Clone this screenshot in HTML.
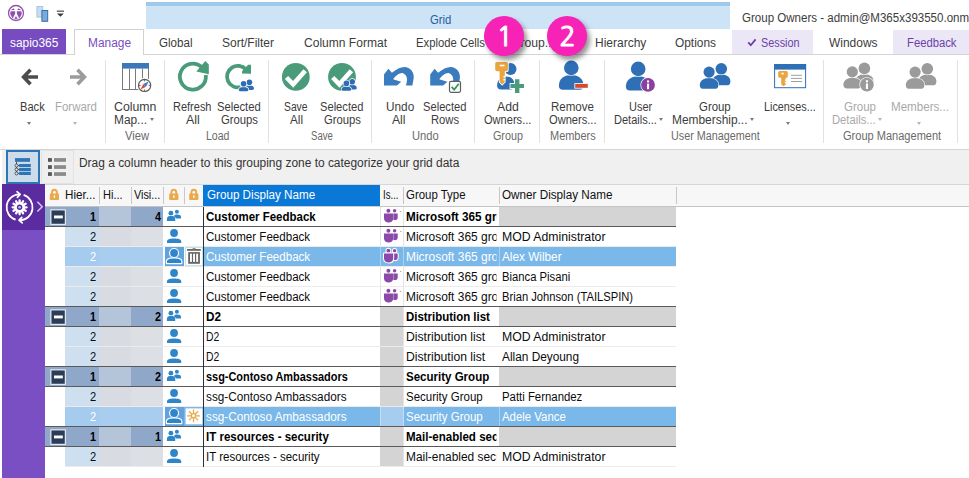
<!DOCTYPE html><html><head><meta charset="utf-8"><title>Group Owners</title><style>
*{margin:0;padding:0;box-sizing:border-box}
html,body{width:969px;height:478px;overflow:hidden;background:#fff}
body{position:relative;font-family:"Liberation Sans",sans-serif;font-size:12px;color:#444;line-height:14px}
.a{position:absolute}
.t{position:absolute;white-space:nowrap;line-height:14px;height:14px;transform-origin:0 0}
.k{position:absolute;white-space:nowrap;overflow:hidden;line-height:14px;height:16px;transform-origin:0 0}
.sep{position:absolute;top:60px;width:1px;height:83px;background:#e2e2e2}
.car{position:absolute;width:0;height:0;border-left:2.5px solid transparent;border-right:2.5px solid transparent;border-top:3px solid #7a7a7a}
.cell{position:absolute;height:19px}
</style></head><body>
<div class="a" style="left:146px;top:2px;width:584px;height:27px;background:#cde3f6;"></div>
<div class="a" style="left:146px;top:2px;width:584px;height:4px;background:#9ec9eb;"></div>
<div class="t" style="left:429.5px;top:13px;color:#1f5f9f;transform:scaleX(0.940)">Grid</div>
<div class="t" style="left:741.7px;top:11px;color:#3c3c3c;transform:scaleX(0.961)">Group Owners - admin@M365x393550.onmicrosoft.com</div>
<div class="a" style="left:0px;top:54px;width:969px;height:1px;background:#d4d4d4;"></div>
<div class="a" style="left:2px;top:29px;width:64px;height:25px;background:#764cc0;"></div>
<div class="t" style="left:10.0px;top:36px;color:#fff;font-size:12.5px;transform:scaleX(0.952)">sapio365</div>
<div class="a" style="left:74px;top:29px;width:70px;height:26px;background:#fff;border:1px solid #d0d0d0;border-bottom:none"></div>
<div class="t" style="left:87.5px;top:36px;color:#7a4cc0;font-size:12.5px;transform:scaleX(0.952)">Manage</div>
<div class="a" style="left:732px;top:30px;width:81px;height:24px;background:#ece7f6;"></div>
<div class="a" style="left:893px;top:30px;width:76px;height:24px;background:#ece7f6;"></div>
<div class="t" style="left:159.0px;top:36px;color:#3c3c3c;transform:scaleX(0.966)">Global</div>
<div class="t" style="left:222.0px;top:36px;color:#3c3c3c;transform:scaleX(1.000)">Sort/Filter</div>
<div class="t" style="left:303.5px;top:36px;color:#3c3c3c;transform:scaleX(1.004)">Column Format</div>
<div class="t" style="left:416.3px;top:36px;color:#3c3c3c;transform:scaleX(0.940)">Explode Cells</div>
<div class="t" style="left:510.6px;top:36px;color:#3c3c3c;transform:scaleX(1.015)">Group...</div>
<div class="t" style="left:594.7px;top:36px;color:#3c3c3c;transform:scaleX(0.999)">Hierarchy</div>
<div class="t" style="left:675.0px;top:36px;color:#3c3c3c;transform:scaleX(0.991)">Options</div>
<div class="t" style="left:760.5px;top:36px;color:#6b40a8;transform:scaleX(0.902)">Session</div>
<div class="t" style="left:828.5px;top:36px;color:#3c3c3c;transform:scaleX(0.996)">Windows</div>
<div class="t" style="left:906.5px;top:36px;color:#6b40a8;transform:scaleX(0.939)">Feedback</div>
<div class="a" style="left:0px;top:149px;width:969px;height:1px;background:#d4d4d4;"></div>
<div class="sep" style="left:105px"></div>
<div class="sep" style="left:164px"></div>
<div class="sep" style="left:268px"></div>
<div class="sep" style="left:371px"></div>
<div class="sep" style="left:474px"></div>
<div class="sep" style="left:539px"></div>
<div class="sep" style="left:604px"></div>
<div class="sep" style="left:823px"></div>
<div class="sep" style="left:957px"></div>
<div class="t" style="left:19.5px;top:100px;color:#3c3c3c;transform:scaleX(0.925)">Back</div>
<div class="t" style="left:55.4px;top:100px;color:#a9a9a9;transform:scaleX(0.954)">Forward</div>
<div class="t" style="left:114.4px;top:100px;color:#3c3c3c;transform:scaleX(1.025)">Column</div>
<div class="t" style="left:114.4px;top:113px;color:#3c3c3c;transform:scaleX(0.990)">Map...</div>
<div class="t" style="left:173.3px;top:100px;color:#3c3c3c;transform:scaleX(0.916)">Refresh</div>
<div class="t" style="left:186.0px;top:113px;color:#3c3c3c;transform:scaleX(1.034)">All</div>
<div class="t" style="left:217.0px;top:100px;color:#3c3c3c;transform:scaleX(0.936)">Selected</div>
<div class="t" style="left:220.5px;top:113px;color:#3c3c3c;transform:scaleX(0.940)">Groups</div>
<div class="t" style="left:284.4px;top:100px;color:#3c3c3c;transform:scaleX(0.859)">Save</div>
<div class="t" style="left:289.9px;top:113px;color:#3c3c3c;transform:scaleX(0.975)">All</div>
<div class="t" style="left:320.4px;top:100px;color:#3c3c3c;transform:scaleX(0.929)">Selected</div>
<div class="t" style="left:323.6px;top:113px;color:#3c3c3c;transform:scaleX(0.940)">Groups</div>
<div class="t" style="left:385.6px;top:100px;color:#3c3c3c;transform:scaleX(0.983)">Undo</div>
<div class="t" style="left:391.8px;top:113px;color:#3c3c3c;transform:scaleX(1.012)">All</div>
<div class="t" style="left:423.0px;top:100px;color:#3c3c3c;transform:scaleX(0.931)">Selected</div>
<div class="t" style="left:431.2px;top:113px;color:#3c3c3c;transform:scaleX(0.933)">Rows</div>
<div class="t" style="left:496.9px;top:100px;color:#3c3c3c;transform:scaleX(1.021)">Add</div>
<div class="t" style="left:483.7px;top:113px;color:#3c3c3c;transform:scaleX(0.923)">Owners...</div>
<div class="t" style="left:551.1px;top:100px;color:#3c3c3c;transform:scaleX(0.962)">Remove</div>
<div class="t" style="left:549.1px;top:113px;color:#3c3c3c;transform:scaleX(0.925)">Owners...</div>
<div class="t" style="left:629.2px;top:100px;color:#3c3c3c;transform:scaleX(0.916)">User</div>
<div class="t" style="left:613.7px;top:113px;color:#3c3c3c;transform:scaleX(0.919)">Details...</div>
<div class="t" style="left:699.4px;top:100px;color:#3c3c3c;transform:scaleX(0.951)">Group</div>
<div class="t" style="left:672.4px;top:113px;color:#3c3c3c;transform:scaleX(0.993)">Membership...</div>
<div class="t" style="left:763.6px;top:100px;color:#3c3c3c;transform:scaleX(0.901)">Licenses...</div>
<div class="t" style="left:843.6px;top:100px;color:#a9a9a9;transform:scaleX(0.960)">Group</div>
<div class="t" style="left:832.4px;top:113px;color:#a9a9a9;transform:scaleX(0.936)">Details...</div>
<div class="t" style="left:891.3px;top:100px;color:#a9a9a9;transform:scaleX(0.967)">Members...</div>
<div class="t" style="left:124.9px;top:129px;color:#6a6a6a;transform:scaleX(0.937)">View</div>
<div class="t" style="left:206.3px;top:129px;color:#6a6a6a;transform:scaleX(0.880)">Load</div>
<div class="t" style="left:310.6px;top:129px;color:#6a6a6a;transform:scaleX(0.800)">Save</div>
<div class="t" style="left:411.8px;top:129px;color:#6a6a6a;transform:scaleX(0.931)">Undo</div>
<div class="t" style="left:493.2px;top:129px;color:#6a6a6a;transform:scaleX(0.897)">Group</div>
<div class="t" style="left:550.4px;top:129px;color:#6a6a6a;transform:scaleX(0.914)">Members</div>
<div class="t" style="left:670.7px;top:129px;color:#6a6a6a;transform:scaleX(0.898)">User Management</div>
<div class="t" style="left:843.1px;top:129px;color:#6a6a6a;transform:scaleX(0.920)">Group Management</div>
<div class="car" style="left:27.3px;top:122px;border-top-color:#7a7a7a"></div>
<div class="car" style="left:73.1px;top:122px;border-top-color:#b5b5b5"></div>
<div class="car" style="left:149.5px;top:117.5px;border-top-color:#7a7a7a"></div>
<div class="car" style="left:659.2px;top:117.5px;border-top-color:#7a7a7a"></div>
<div class="car" style="left:749.9px;top:117.5px;border-top-color:#7a7a7a"></div>
<div class="car" style="left:786.0px;top:122px;border-top-color:#7a7a7a"></div>
<div class="car" style="left:878.0px;top:117.5px;border-top-color:#b5b5b5"></div>
<div class="car" style="left:916.8px;top:122px;border-top-color:#b5b5b5"></div>
<div class="a" style="left:2px;top:150px;width:967px;height:34px;background:#f0f0f0;"></div>
<div class="a" style="left:6px;top:150px;width:34px;height:34px;background:#cddceb;border:2px solid #2e75b6"></div>
<div class="a" style="left:41px;top:150px;width:33px;height:34px;background:#efefef;border:1px solid #e2e2e2"></div>
<div class="t" style="left:79.2px;top:156px;color:#333;transform:scaleX(0.995)">Drag a column header to this grouping zone to categorize your grid data</div>
<div class="a" style="left:2px;top:184px;width:43px;height:294px;background:#7a4fc4;"></div>
<div class="a" style="left:2px;top:184px;width:43px;height:46px;background:#5a2ca0;"></div>
<div class="a" style="left:45px;top:184px;width:924px;height:23px;background:#f7f7f7;border-top:1px solid #d6d6d6;border-bottom:1px solid #cfcfcf"></div>
<div class="a" style="left:203px;top:185px;width:177px;height:21px;background:#0a78d7;"></div>
<div class="a" style="left:99px;top:187px;width:1px;height:17px;background:#c8c8c8;"></div>
<div class="a" style="left:131px;top:187px;width:1px;height:17px;background:#c8c8c8;"></div>
<div class="a" style="left:163px;top:187px;width:1px;height:17px;background:#c8c8c8;"></div>
<div class="a" style="left:184px;top:187px;width:1px;height:17px;background:#c8c8c8;"></div>
<div class="a" style="left:403px;top:187px;width:1px;height:17px;background:#c8c8c8;"></div>
<div class="a" style="left:499px;top:187px;width:1px;height:17px;background:#c8c8c8;"></div>
<div class="a" style="left:676px;top:187px;width:1px;height:17px;background:#c8c8c8;"></div>
<div class="t" style="left:65.4px;top:188px;color:#111;transform:scaleX(0.973)">Hier...</div>
<div class="t" style="left:102.7px;top:188px;color:#111;transform:scaleX(0.919)">Hi...</div>
<div class="t" style="left:134.2px;top:188px;color:#111;transform:scaleX(0.903)">Visi...</div>
<div class="t" style="left:206.8px;top:188px;color:#fff;transform:scaleX(0.971)">Group Display Name</div>
<div class="t" style="left:382.8px;top:188px;color:#111;transform:scaleX(0.801)">Is...</div>
<div class="t" style="left:406.3px;top:188px;color:#111;transform:scaleX(0.952)">Group Type</div>
<div class="t" style="left:502.4px;top:188px;color:#111;transform:scaleX(0.975)">Owner Display Name</div>
<div class="a" style="left:45px;top:207px;width:54px;height:19px;background:#8fa8ca;"></div>
<div class="a" style="left:99px;top:207px;width:32px;height:19px;background:#b4c4d9;"></div>
<div class="a" style="left:131px;top:207px;width:32px;height:19px;background:#8fa8ca;"></div>
<div class="a" style="left:499px;top:207px;width:177px;height:19px;background:#d4d4d4;"></div>
<div class="t" style="left:90.0px;top:210px;color:#000;font-weight:bold;transform:scaleX(0.900)">1</div>
<div class="t" style="left:154.6px;top:210px;color:#000;font-weight:bold;transform:scaleX(0.900)">4</div>
<div class="t" style="left:206.3px;top:210px;color:#000;font-weight:bold;transform:scaleX(0.956)">Customer Feedback</div>
<div class="k" style="left:406.3px;width:92.6px;top:210px;color:#000;font-weight:bold;transform:scaleX(0.977)">Microsoft 365 group</div>
<div class="a" style="left:45px;top:226px;width:631px;height:1px;background:#5a5a5a;"></div>
<div class="a" style="left:380px;top:207px;width:1px;height:19px;background:#e4e4e4;"></div>
<div class="a" style="left:403px;top:207px;width:1px;height:19px;background:#e4e4e4;"></div>
<div class="a" style="left:65px;top:227px;width:34px;height:19px;background:#cedfef;"></div>
<div class="a" style="left:99px;top:227px;width:32px;height:19px;background:#d8dce2;"></div>
<div class="a" style="left:131px;top:227px;width:32px;height:19px;background:#dcdfe3;"></div>
<div class="t" style="left:90.2px;top:230px;color:#0c0c0c;transform:scaleX(0.930)">2</div>
<div class="t" style="left:206.3px;top:230px;color:#0c0c0c;transform:scaleX(0.964)">Customer Feedback</div>
<div class="k" style="left:406.3px;width:91.0px;top:230px;color:#0c0c0c;transform:scaleX(0.995)">Microsoft 365 group</div>
<div class="t" style="left:502.4px;top:230px;color:#0c0c0c;transform:scaleX(1.021)">MOD Administrator</div>
<div class="a" style="left:65px;top:246px;width:611px;height:1px;background:#ebebeb;"></div>
<div class="a" style="left:380px;top:227px;width:1px;height:19px;background:#e4e4e4;"></div>
<div class="a" style="left:403px;top:227px;width:1px;height:19px;background:#e4e4e4;"></div>
<div class="a" style="left:65px;top:247px;width:34px;height:19px;background:#a5cbee;"></div>
<div class="a" style="left:99px;top:247px;width:32px;height:19px;background:#a9cdef;"></div>
<div class="a" style="left:131px;top:247px;width:32px;height:19px;background:#a9cdef;"></div>
<div class="a" style="left:164px;top:247px;width:512px;height:19px;background:#7ab8ea;"></div>
<div class="a" style="left:380px;top:247px;width:24px;height:19px;background:#7ab8ea;"></div>
<div class="t" style="left:90.2px;top:250px;color:#fff;transform:scaleX(0.930)">2</div>
<div class="t" style="left:206.3px;top:250px;color:#fff;transform:scaleX(0.964)">Customer Feedback</div>
<div class="k" style="left:406.3px;width:91.0px;top:250px;color:#fff;transform:scaleX(0.995)">Microsoft 365 group</div>
<div class="t" style="left:502.4px;top:250px;color:#fff;transform:scaleX(0.982)">Alex Wilber</div>
<div class="a" style="left:65px;top:266px;width:611px;height:1px;background:#ebebeb;"></div>
<div class="a" style="left:380px;top:247px;width:1px;height:19px;background:rgba(255,255,255,.35);"></div>
<div class="a" style="left:403px;top:247px;width:1px;height:19px;background:rgba(255,255,255,.35);"></div>
<div class="a" style="left:499px;top:247px;width:1px;height:19px;background:rgba(255,255,255,.35);"></div>
<div class="a" style="left:65px;top:267px;width:34px;height:19px;background:#cedfef;"></div>
<div class="a" style="left:99px;top:267px;width:32px;height:19px;background:#d8dce2;"></div>
<div class="a" style="left:131px;top:267px;width:32px;height:19px;background:#dcdfe3;"></div>
<div class="t" style="left:90.2px;top:270px;color:#0c0c0c;transform:scaleX(0.930)">2</div>
<div class="t" style="left:206.3px;top:270px;color:#0c0c0c;transform:scaleX(0.964)">Customer Feedback</div>
<div class="k" style="left:406.3px;width:91.0px;top:270px;color:#0c0c0c;transform:scaleX(0.995)">Microsoft 365 group</div>
<div class="t" style="left:502.4px;top:270px;color:#0c0c0c;transform:scaleX(0.939)">Bianca Pisani</div>
<div class="a" style="left:65px;top:286px;width:611px;height:1px;background:#ebebeb;"></div>
<div class="a" style="left:380px;top:267px;width:1px;height:19px;background:#e4e4e4;"></div>
<div class="a" style="left:403px;top:267px;width:1px;height:19px;background:#e4e4e4;"></div>
<div class="a" style="left:65px;top:287px;width:34px;height:19px;background:#cedfef;"></div>
<div class="a" style="left:99px;top:287px;width:32px;height:19px;background:#d8dce2;"></div>
<div class="a" style="left:131px;top:287px;width:32px;height:19px;background:#dcdfe3;"></div>
<div class="t" style="left:90.2px;top:290px;color:#0c0c0c;transform:scaleX(0.930)">2</div>
<div class="t" style="left:206.3px;top:290px;color:#0c0c0c;transform:scaleX(0.964)">Customer Feedback</div>
<div class="k" style="left:406.3px;width:91.0px;top:290px;color:#0c0c0c;transform:scaleX(0.995)">Microsoft 365 group</div>
<div class="t" style="left:502.4px;top:290px;color:#0c0c0c;transform:scaleX(0.933)">Brian Johnson (TAILSPIN)</div>
<div class="a" style="left:45px;top:306px;width:631px;height:1px;background:#5a5a5a;"></div>
<div class="a" style="left:380px;top:287px;width:1px;height:19px;background:#e4e4e4;"></div>
<div class="a" style="left:403px;top:287px;width:1px;height:19px;background:#e4e4e4;"></div>
<div class="a" style="left:45px;top:307px;width:54px;height:19px;background:#8fa8ca;"></div>
<div class="a" style="left:99px;top:307px;width:32px;height:19px;background:#b4c4d9;"></div>
<div class="a" style="left:131px;top:307px;width:32px;height:19px;background:#8fa8ca;"></div>
<div class="a" style="left:380px;top:307px;width:24px;height:19px;background:#d4d4d4;"></div>
<div class="a" style="left:499px;top:307px;width:177px;height:19px;background:#d4d4d4;"></div>
<div class="t" style="left:90.0px;top:310px;color:#000;font-weight:bold;transform:scaleX(0.900)">1</div>
<div class="t" style="left:154.6px;top:310px;color:#000;font-weight:bold;transform:scaleX(0.900)">2</div>
<div class="t" style="left:206.3px;top:310px;color:#000;font-weight:bold;transform:scaleX(0.978)">D2</div>
<div class="k" style="left:406.3px;width:94.9px;top:310px;color:#000;font-weight:bold;transform:scaleX(0.953)">Distribution list</div>
<div class="a" style="left:45px;top:326px;width:631px;height:1px;background:#5a5a5a;"></div>
<div class="a" style="left:403px;top:307px;width:1px;height:19px;background:#e4e4e4;"></div>
<div class="a" style="left:65px;top:327px;width:34px;height:19px;background:#cedfef;"></div>
<div class="a" style="left:99px;top:327px;width:32px;height:19px;background:#d8dce2;"></div>
<div class="a" style="left:131px;top:327px;width:32px;height:19px;background:#dcdfe3;"></div>
<div class="a" style="left:380px;top:327px;width:24px;height:19px;background:#d4d4d4;"></div>
<div class="t" style="left:90.2px;top:330px;color:#0c0c0c;transform:scaleX(0.930)">2</div>
<div class="t" style="left:206.3px;top:330px;color:#0c0c0c;transform:scaleX(0.867)">D2</div>
<div class="k" style="left:406.3px;width:89.2px;top:330px;color:#0c0c0c;transform:scaleX(1.015)">Distribution list</div>
<div class="t" style="left:502.4px;top:330px;color:#0c0c0c;transform:scaleX(1.021)">MOD Administrator</div>
<div class="a" style="left:65px;top:346px;width:611px;height:1px;background:#ebebeb;"></div>
<div class="a" style="left:403px;top:327px;width:1px;height:19px;background:#e4e4e4;"></div>
<div class="a" style="left:65px;top:347px;width:34px;height:19px;background:#cedfef;"></div>
<div class="a" style="left:99px;top:347px;width:32px;height:19px;background:#d8dce2;"></div>
<div class="a" style="left:131px;top:347px;width:32px;height:19px;background:#dcdfe3;"></div>
<div class="a" style="left:380px;top:347px;width:24px;height:19px;background:#d4d4d4;"></div>
<div class="t" style="left:90.2px;top:350px;color:#0c0c0c;transform:scaleX(0.930)">2</div>
<div class="t" style="left:206.3px;top:350px;color:#0c0c0c;transform:scaleX(0.867)">D2</div>
<div class="k" style="left:406.3px;width:89.2px;top:350px;color:#0c0c0c;transform:scaleX(1.015)">Distribution list</div>
<div class="t" style="left:502.4px;top:350px;color:#0c0c0c;transform:scaleX(0.987)">Allan Deyoung</div>
<div class="a" style="left:45px;top:366px;width:631px;height:1px;background:#5a5a5a;"></div>
<div class="a" style="left:403px;top:347px;width:1px;height:19px;background:#e4e4e4;"></div>
<div class="a" style="left:45px;top:367px;width:54px;height:19px;background:#8fa8ca;"></div>
<div class="a" style="left:99px;top:367px;width:32px;height:19px;background:#b4c4d9;"></div>
<div class="a" style="left:131px;top:367px;width:32px;height:19px;background:#8fa8ca;"></div>
<div class="a" style="left:380px;top:367px;width:24px;height:19px;background:#d4d4d4;"></div>
<div class="a" style="left:499px;top:367px;width:177px;height:19px;background:#d4d4d4;"></div>
<div class="t" style="left:90.0px;top:370px;color:#000;font-weight:bold;transform:scaleX(0.900)">1</div>
<div class="t" style="left:154.6px;top:370px;color:#000;font-weight:bold;transform:scaleX(0.900)">2</div>
<div class="t" style="left:206.3px;top:370px;color:#000;font-weight:bold;transform:scaleX(0.911)">ssg-Contoso Ambassadors</div>
<div class="k" style="left:406.3px;width:94.3px;top:370px;color:#000;font-weight:bold;transform:scaleX(0.960)">Security Group</div>
<div class="a" style="left:45px;top:386px;width:631px;height:1px;background:#5a5a5a;"></div>
<div class="a" style="left:403px;top:367px;width:1px;height:19px;background:#e4e4e4;"></div>
<div class="a" style="left:65px;top:387px;width:34px;height:19px;background:#cedfef;"></div>
<div class="a" style="left:99px;top:387px;width:32px;height:19px;background:#d8dce2;"></div>
<div class="a" style="left:131px;top:387px;width:32px;height:19px;background:#dcdfe3;"></div>
<div class="a" style="left:380px;top:387px;width:24px;height:19px;background:#d4d4d4;"></div>
<div class="t" style="left:90.2px;top:390px;color:#0c0c0c;transform:scaleX(0.930)">2</div>
<div class="t" style="left:206.3px;top:390px;color:#0c0c0c;transform:scaleX(0.980)">ssg-Contoso Ambassadors</div>
<div class="k" style="left:406.3px;width:94.4px;top:390px;color:#0c0c0c;transform:scaleX(0.958)">Security Group</div>
<div class="t" style="left:502.4px;top:390px;color:#0c0c0c;transform:scaleX(0.948)">Patti Fernandez</div>
<div class="a" style="left:65px;top:406px;width:611px;height:1px;background:#ebebeb;"></div>
<div class="a" style="left:403px;top:387px;width:1px;height:19px;background:#e4e4e4;"></div>
<div class="a" style="left:65px;top:407px;width:34px;height:19px;background:#a5cbee;"></div>
<div class="a" style="left:99px;top:407px;width:32px;height:19px;background:#a9cdef;"></div>
<div class="a" style="left:131px;top:407px;width:32px;height:19px;background:#a9cdef;"></div>
<div class="a" style="left:164px;top:407px;width:512px;height:19px;background:#7ab8ea;"></div>
<div class="a" style="left:380px;top:407px;width:24px;height:19px;background:#a6cdf0;"></div>
<div class="t" style="left:90.2px;top:410px;color:#fff;transform:scaleX(0.930)">2</div>
<div class="t" style="left:206.3px;top:410px;color:#fff;transform:scaleX(0.980)">ssg-Contoso Ambassadors</div>
<div class="k" style="left:406.3px;width:94.4px;top:410px;color:#fff;transform:scaleX(0.958)">Security Group</div>
<div class="t" style="left:502.4px;top:410px;color:#fff;transform:scaleX(0.951)">Adele Vance</div>
<div class="a" style="left:45px;top:426px;width:631px;height:1px;background:#5a5a5a;"></div>
<div class="a" style="left:380px;top:407px;width:1px;height:19px;background:rgba(255,255,255,.35);"></div>
<div class="a" style="left:403px;top:407px;width:1px;height:19px;background:rgba(255,255,255,.35);"></div>
<div class="a" style="left:499px;top:407px;width:1px;height:19px;background:rgba(255,255,255,.35);"></div>
<div class="a" style="left:45px;top:427px;width:54px;height:19px;background:#8fa8ca;"></div>
<div class="a" style="left:99px;top:427px;width:32px;height:19px;background:#b4c4d9;"></div>
<div class="a" style="left:131px;top:427px;width:32px;height:19px;background:#8fa8ca;"></div>
<div class="a" style="left:380px;top:427px;width:24px;height:19px;background:#d4d4d4;"></div>
<div class="a" style="left:499px;top:427px;width:177px;height:19px;background:#d4d4d4;"></div>
<div class="t" style="left:90.0px;top:430px;color:#000;font-weight:bold;transform:scaleX(0.900)">1</div>
<div class="t" style="left:154.6px;top:430px;color:#000;font-weight:bold;transform:scaleX(0.900)">1</div>
<div class="t" style="left:206.3px;top:430px;color:#000;font-weight:bold;transform:scaleX(0.959)">IT resources - security</div>
<div class="k" style="left:406.3px;width:94.0px;top:430px;color:#000;font-weight:bold;transform:scaleX(0.962)">Mail-enabled security</div>
<div class="a" style="left:45px;top:446px;width:631px;height:1px;background:#5a5a5a;"></div>
<div class="a" style="left:403px;top:427px;width:1px;height:19px;background:#e4e4e4;"></div>
<div class="a" style="left:65px;top:447px;width:34px;height:19px;background:#cedfef;"></div>
<div class="a" style="left:99px;top:447px;width:32px;height:19px;background:#d8dce2;"></div>
<div class="a" style="left:131px;top:447px;width:32px;height:19px;background:#dcdfe3;"></div>
<div class="a" style="left:380px;top:447px;width:24px;height:19px;background:#d4d4d4;"></div>
<div class="t" style="left:90.2px;top:450px;color:#0c0c0c;transform:scaleX(0.930)">2</div>
<div class="t" style="left:206.3px;top:450px;color:#0c0c0c;transform:scaleX(0.959)">IT resources - security</div>
<div class="k" style="left:406.3px;width:91.3px;top:450px;color:#0c0c0c;transform:scaleX(0.992)">Mail-enabled security</div>
<div class="t" style="left:502.4px;top:450px;color:#0c0c0c;transform:scaleX(1.021)">MOD Administrator</div>
<div class="a" style="left:65px;top:466px;width:611px;height:1px;background:#ebebeb;"></div>
<div class="a" style="left:403px;top:447px;width:1px;height:19px;background:#e4e4e4;"></div>
<div class="a" style="left:45px;top:206px;width:158px;height:1px;background:#c4c4c4;"></div>
<div class="a" style="left:380px;top:206px;width:589px;height:1px;background:#c4c4c4;"></div>
<div class="a" style="left:203px;top:207px;width:1px;height:260px;background:#2a2f3a;"></div>
<svg class="a" style="left:0;top:0" width="969" height="478" viewBox="0 0 969 478">
<circle cx="16" cy="13" r="7.5" fill="#fff" stroke="#9150ab" stroke-width="1.3"/><clipPath id="lg"><circle cx="16" cy="13.2" r="5.7"/></clipPath><g clip-path="url(#lg)"><rect x="9" y="8.4" width="14" height="12" fill="#9150ab"/><path d="M9,10.7 H23" stroke="#fff" stroke-width="1.3"/><circle cx="16" cy="8.4" r="2" fill="#fff"/><path d="M16,9 V15.2 M16,14 L12.9,20 M16,14 L19.1,20" stroke="#fff" stroke-width="1.7" fill="none"/></g><rect x="36.9" y="6.5" width="5.8" height="10.6" fill="#c9dcef" stroke="#a9c5e3" stroke-width="1"/><rect x="41.9" y="10.5" width="5.8" height="10.8" fill="#7fa8d4" stroke="#2f6fb5" stroke-width="1"/><rect x="56.8" y="10.6" width="7.2" height="1.1" fill="#3a3a3a"/><path d="M57,13.4 H63.8 L60.4,16.8Z" fill="#3a3a3a"/>
<path d="M38,77 H25 M30.5,69.8 L23.6,77 L30.5,84.2" fill="none" stroke="#4d4d4d" stroke-width="3.6" stroke-linejoin="miter"/><path d="M70,77 H83 M77.5,69.8 L84.4,77 L77.5,84.2" fill="none" stroke="#9c9c9c" stroke-width="3.6" stroke-linejoin="miter"/><rect x="122.5" y="63.5" width="26" height="26" fill="#fff" stroke="#7a7a7a" stroke-width="1"/><rect x="122" y="63" width="27" height="5.6" fill="#3b78b9"/><path d="M129.5,68.6 V89 M135.5,68.6 V89 M142.5,68.6 V89" stroke="#7a7a7a" stroke-width="1" fill="none"/><circle cx="144.6" cy="85.4" r="6.4" fill="#fff" stroke="#fff" stroke-width="2.5"/><circle cx="144.6" cy="85.4" r="6.1" fill="#fff" stroke="#5a5a5a" stroke-width="1.2"/><path d="M148.6,81.4 L146,86.8 L143.2,84Z" fill="#2f7fd0"/><path d="M140.6,89.4 L143.2,84 L146,86.8Z" fill="#e04a35"/><path d="M144.6,79.8 v1.6 M144.6,89.4 v1.6 M139,85.4 h1.6 M148.6,85.4 h1.6" stroke="#5a5a5a" stroke-width="0.9"/><path d="M205.80,75.02 A13,13 0 1 1 201.60,66.94" fill="none" stroke="#4a9b7a" stroke-width="3.8"/><polygon points="205.3,61.1 208.8,64.5 208.8,74.2 196.3,71.4" fill="#4a9b7a"/><path d="M240.60,87.03 A10.8,10.8 0 1 1 245.83,69.37" fill="none" stroke="#4a9b7a" stroke-width="3.8"/><polygon points="248.1,64.7 251,64.7 251,73.7 242,73.5 242,71.3" fill="#4a9b7a"/><g transform="translate(238.4,79.0) scale(1.0)"><path d="M6.5,9.3 Q6.5,11.0 8.2,11.0 L13.9,11.0 Q15.6,11.0 15.6,9.3 C15.6,7.6 14.0,6.2 11.1,6.2 C8.1,6.2 6.5,7.6 6.5,9.3Z" fill="#2e6db4" stroke="#fff" stroke-width="1.4" paint-order="stroke"/><circle cx="11.0" cy="3.2" r="2.8" fill="#2e6db4" stroke="#fff" stroke-width="1.4" paint-order="stroke"/><path d="M0.4,10.7 Q0.4,12.2 1.9,12.2 L8.5,12.2 Q10.0,12.2 10.0,10.7 C10.0,9.3 8.3,8.0 5.2,8.0 C2.1,8.0 0.4,9.3 0.4,10.7Z" fill="#2e6db4" stroke="#fff" stroke-width="1.4" paint-order="stroke"/><circle cx="5.2" cy="4.8" r="2.8" fill="#2e6db4" stroke="#fff" stroke-width="1.4" paint-order="stroke"/></g><circle cx="295.8" cy="76.9" r="13.9" fill="#4a9b7a"/><path d="M286.5,77.5 L293.2,84.3 L305.2,70.7" fill="none" stroke="#fff" stroke-width="4.6" stroke-linejoin="miter"/><circle cx="342" cy="76.9" r="13.9" fill="#4a9b7a"/><path d="M332.7,77.5 L339.4,84.3 L351.4,70.7" fill="none" stroke="#fff" stroke-width="4.6" stroke-linejoin="miter"/><g transform="translate(341.2,78.6) scale(1.0)"><path d="M6.5,9.3 Q6.5,11.0 8.2,11.0 L13.9,11.0 Q15.6,11.0 15.6,9.3 C15.6,7.6 14.0,6.2 11.1,6.2 C8.1,6.2 6.5,7.6 6.5,9.3Z" fill="#2e6db4" stroke="#fff" stroke-width="1.4" paint-order="stroke"/><circle cx="11.0" cy="3.2" r="2.8" fill="#2e6db4" stroke="#fff" stroke-width="1.4" paint-order="stroke"/><path d="M0.4,10.7 Q0.4,12.2 1.9,12.2 L8.5,12.2 Q10.0,12.2 10.0,10.7 C10.0,9.3 8.3,8.0 5.2,8.0 C2.1,8.0 0.4,9.3 0.4,10.7Z" fill="#2e6db4" stroke="#fff" stroke-width="1.4" paint-order="stroke"/><circle cx="5.2" cy="4.8" r="2.8" fill="#2e6db4" stroke="#fff" stroke-width="1.4" paint-order="stroke"/></g><path transform="translate(0,0)" d="M388.4,68.8 L391.9,72.8 C396.1,69.3 400.7,67 404.5,67 C410,67.2 414.4,72.1 413.7,78.1 L412.4,85.5 L405.9,85.5 C407.9,80 407.5,75.3 403.1,73.2 C399.8,72.5 395.6,75.8 393.1,79.3 L401.2,81.8 L397,85.5 L384,85.5 L384,74.4Z" fill="#3a7cc0"/><path transform="translate(46.2,0)" d="M388.4,68.8 L391.9,72.8 C396.1,69.3 400.7,67 404.5,67 C410,67.2 414.4,72.1 413.7,78.1 L412.4,85.5 L405.9,85.5 C407.9,80 407.5,75.3 403.1,73.2 C399.8,72.5 395.6,75.8 393.1,79.3 L401.2,81.8 L397,85.5 L384,85.5 L384,74.4Z" fill="#3a7cc0"/><rect x="449.5" y="81.3" width="11" height="11" rx="1.5" fill="#fff" stroke="#5c5c5c" stroke-width="1.2"/><path d="M451.6,86.8 L454.2,89.6 L458.8,83.8" fill="none" stroke="#2f9a5a" stroke-width="1.8"/><path d="M497.1,85.4 Q497.1,89.4 501.1,89.4 L510.6,89.4 Q514.6,89.4 514.6,85.4 C514.6,80.3 511.5,76.4 505.9,76.4 C500.2,76.4 497.1,80.3 497.1,85.4Z" fill="#2f6fb5" stroke="#fff" stroke-width="0" paint-order="stroke"/><circle cx="510.6" cy="69.0" r="5.9" fill="#2f6fb5" stroke="#fff" stroke-width="0" paint-order="stroke"/><g stroke="#fff" stroke-width="1.6" paint-order="stroke"><g transform="translate(495.2,62.0) scale(1.0)"><path d="M1.5,0 H11.2 Q12.7,0 12.7,1.5 V7.5 Q12.7,9.3 11,9.3 H9.6 V14 H8.2 V15.6 H9.6 V17 H8.2 V18.6 H9.6 V20 L7,22.6 L4.4,20 V9.3 H1.7 Q0,9.3 0,7.5 V1.5 Q0,0 1.5,0Z" fill="#e9a53f"/><rect x="4.6" y="2.7" width="4.7" height="1.6" fill="#fff" stroke="none"/></g></g><path d="M515,79.3 h4.4 v4.6 h4.6 v4.2 h-4.6 v4.8 h-4.4 v-4.8 h-4.6 v-4.2 h4.6Z" fill="#4a9b7a" stroke="#fff" stroke-width="1.6" paint-order="stroke"/><path d="M558.9,85.7 Q558.9,89.7 562.9,89.7 L579.5,89.7 Q583.5,89.7 583.5,85.7 C583.5,79.4 579.1,75.0 571.2,75.0 C563.3,75.0 558.9,79.4 558.9,85.7Z" fill="#2f6fb5" stroke="#fff" stroke-width="1.2" paint-order="stroke"/><circle cx="571.3" cy="67.9" r="7.3" fill="#2f6fb5" stroke="#fff" stroke-width="1.2" paint-order="stroke"/><rect x="575.2" y="83.9" width="12.6" height="3.9" fill="#d9482b" stroke="#fff" stroke-width="1.6" paint-order="stroke"/><path d="M625.9,86.4 Q625.9,90.4 629.9,90.4 L646.5,90.4 Q650.5,90.4 650.5,86.4 C650.5,80.5 646.1,76.2 638.2,76.2 C630.3,76.2 625.9,80.5 625.9,86.4Z" fill="#2f6fb5" stroke="#fff" stroke-width="1.2" paint-order="stroke"/><circle cx="638.2" cy="68.9" r="7.3" fill="#2f6fb5" stroke="#fff" stroke-width="1.2" paint-order="stroke"/><circle cx="648" cy="84.9" r="6.9" fill="#8c3fa0" stroke="#fff" stroke-width="1.4" paint-order="stroke"/><rect x="647" y="83.6" width="2.1" height="5.6" fill="#fff"/><rect x="647" y="80.4" width="2.1" height="2.1" fill="#fff"/><path d="M712.5,81.4 Q712.5,85.3 716.4,85.3 L726.5,85.3 Q730.4,85.3 730.4,81.4 C730.4,77.8 727.2,74.6 721.5,74.6 C715.7,74.6 712.5,77.8 712.5,81.4Z" fill="#2f6fb5" stroke="#fff" stroke-width="1.2" paint-order="stroke"/><circle cx="721.3" cy="68.8" r="5.8" fill="#2f6fb5" stroke="#fff" stroke-width="1.2" paint-order="stroke"/><path d="M699.8,84.9 Q699.8,88.8 703.7,88.8 L714.5,88.8 Q718.4,88.8 718.4,84.9 C718.4,81.2 715.1,78.0 709.1,78.0 C703.1,78.0 699.8,81.2 699.8,84.9Z" fill="#2f6fb5" stroke="#fff" stroke-width="1.2" paint-order="stroke"/><circle cx="709.1" cy="72.1" r="5.6" fill="#2f6fb5" stroke="#fff" stroke-width="1.2" paint-order="stroke"/><rect x="774.6" y="64.5" width="31" height="23.2" fill="#fff" stroke="#2f6fb5" stroke-width="1"/><rect x="774.1" y="64" width="32" height="5.6" fill="#2f6fb5"/><path d="M779.7,71.1 H786.3 Q787.8,71.1 787.8,72.6 V76.2 Q787.8,77.7 786.3,77.7 H785.8 V79.6 H784.8 V80.8 H785.8 V82 H784.8 V83.2 H785.8 V84.4 L783.5,86.3 L781.2,84.4 V77.7 H779.7 Q778.2,77.7 778.2,76.2 V72.6 Q778.2,71.1 779.7,71.1Z" fill="#e9a53f"/><rect x="781.4" y="72.7" width="2.3" height="1.7" fill="#fff"/><path d="M791,75.3 h11 M791,78.4 h11 M791,81.5 h11" stroke="#a0a0a0" stroke-width="1"/><path d="M855.6,81.0 Q855.6,84.9 859.5,84.9 L869.6,84.9 Q873.5,84.9 873.5,81.0 C873.5,77.4 870.3,74.2 864.5,74.2 C858.8,74.2 855.6,77.4 855.6,81.0Z" fill="#9b9b9b" stroke="#fff" stroke-width="1.2" paint-order="stroke"/><circle cx="864.4" cy="68.4" r="5.8" fill="#9b9b9b" stroke="#fff" stroke-width="1.2" paint-order="stroke"/><path d="M843.4,84.5 Q843.4,88.4 847.3,88.4 L857.7,88.4 Q861.6,88.4 861.6,84.5 C861.6,80.9 858.3,77.7 852.5,77.7 C846.7,77.7 843.4,80.9 843.4,84.5Z" fill="#9b9b9b" stroke="#fff" stroke-width="1.2" paint-order="stroke"/><circle cx="852.3" cy="71.9" r="5.6" fill="#9b9b9b" stroke="#fff" stroke-width="1.2" paint-order="stroke"/><circle cx="866.9" cy="84.7" r="6.9" fill="#9b9b9b" stroke="#fff" stroke-width="1.3" paint-order="stroke"/><rect x="865.9" y="83.4" width="2.1" height="5.6" fill="#fff"/><rect x="865.9" y="80.2" width="2.1" height="2.1" fill="#fff"/><path d="M918.5,81.4 Q918.5,85.3 922.4,85.3 L932.5,85.3 Q936.4,85.3 936.4,81.4 C936.4,77.8 933.2,74.6 927.5,74.6 C921.7,74.6 918.5,77.8 918.5,81.4Z" fill="#9b9b9b" stroke="#fff" stroke-width="1.2" paint-order="stroke"/><circle cx="927.3" cy="68.8" r="5.8" fill="#9b9b9b" stroke="#fff" stroke-width="1.2" paint-order="stroke"/><path d="M905.8,84.9 Q905.8,88.8 909.7,88.8 L920.5,88.8 Q924.4,88.8 924.4,84.9 C924.4,81.2 921.1,78.0 915.1,78.0 C909.1,78.0 905.8,81.2 905.8,84.9Z" fill="#9b9b9b" stroke="#fff" stroke-width="1.2" paint-order="stroke"/><circle cx="915.1" cy="72.1" r="5.6" fill="#9b9b9b" stroke="#fff" stroke-width="1.2" paint-order="stroke"/>
<rect x="15" y="158.1" width="15" height="3.7" fill="#2e75b6"/><path d="M16.5,161.8 V173.5" stroke="#444" stroke-width="0.9"/><rect x="19.1" y="164" width="11.7" height="3.1" fill="#2e75b6"/><circle cx="16.5" cy="165.55" r="1.5" fill="#dfe8f1" stroke="#444" stroke-width="0.9"/><path d="M18,165.55 H19.2" stroke="#444" stroke-width="0.9"/><rect x="19.1" y="168" width="11.7" height="3.1" fill="#2e75b6"/><circle cx="16.5" cy="169.55" r="1.5" fill="#dfe8f1" stroke="#444" stroke-width="0.9"/><path d="M18,169.55 H19.2" stroke="#444" stroke-width="0.9"/><rect x="19.1" y="171.9" width="11.7" height="3.1" fill="#2e75b6"/><circle cx="16.5" cy="173.45000000000002" r="1.5" fill="#dfe8f1" stroke="#444" stroke-width="0.9"/><path d="M18,173.45000000000002 H19.2" stroke="#444" stroke-width="0.9"/><rect x="48" y="158.1" width="3.9" height="3.7" fill="#555"/><rect x="54" y="158.1" width="12" height="3.7" fill="#8a8a8a"/><rect x="48" y="165.2" width="3.9" height="3.7" fill="#555"/><rect x="54" y="165.2" width="12" height="3.7" fill="#8a8a8a"/><rect x="48" y="172.2" width="3.9" height="3.7" fill="#555"/><rect x="54" y="172.2" width="12" height="3.7" fill="#8a8a8a"/>
<path d="M15.58,219.66 A13.0,13.0 0 0 1 19.15,194.31" fill="none" stroke="#fff" stroke-width="1.8"/><path d="M23.62,194.94 A13.0,13.0 0 0 1 20.05,220.29" fill="none" stroke="#fff" stroke-width="1.8"/><path d="M17.0,191.7 L20.2,194.4 L17.4,197.3" fill="none" stroke="#fff" stroke-width="1.7" stroke-linejoin="round" stroke-linecap="round"/><path d="M22.2,222.9 L19.0,220.2 L21.8,217.3" fill="none" stroke="#fff" stroke-width="1.7" stroke-linejoin="round" stroke-linecap="round"/><path d="M24.10,207.30 L26.60,207.30 M23.50,209.55 L25.66,210.80 M21.85,211.20 L23.10,213.36 M19.60,211.80 L19.60,214.30 M17.35,211.20 L16.10,213.36 M15.70,209.55 L13.54,210.80 M15.10,207.30 L12.60,207.30 M15.70,205.05 L13.54,203.80 M17.35,203.40 L16.10,201.24 M19.60,202.80 L19.60,200.30 M21.85,203.40 L23.10,201.24 M23.50,205.05 L25.66,203.80 " stroke="#fff" stroke-width="2.3" stroke-linecap="round" fill="none"/><circle cx="19.6" cy="207.3" r="5.4" fill="#fff"/><circle cx="19.6" cy="207.3" r="2.7" fill="#5a2ca0"/><circle cx="19.6" cy="207.3" r="1.3" fill="#cbb9ea"/><path d="M37.4,201.8 L42.2,206.7 L37.4,211.6" fill="none" stroke="#d5c8ee" stroke-width="1.5"/>
<path d="M748.2,42.4 L750.8,45.2 L755.6,39.4" fill="none" stroke="#6b40a8" stroke-width="1.8"/>
<g transform="translate(49.8,189)"><path d="M2.2,5 V3.4 A2.4,2.6 0 0 1 7,3.4 V5" fill="none" stroke="#e9aa4b" stroke-width="1.9"/><rect x="0" y="4.6" width="9.2" height="6.4" rx="0.8" fill="#e9aa4b"/><rect x="4" y="6.4" width="1.3" height="2.6" fill="#fff"/></g>
<g transform="translate(169.2,189)"><path d="M2.2,5 V3.4 A2.4,2.6 0 0 1 7,3.4 V5" fill="none" stroke="#e9aa4b" stroke-width="1.9"/><rect x="0" y="4.6" width="9.2" height="6.4" rx="0.8" fill="#e9aa4b"/><rect x="4" y="6.4" width="1.3" height="2.6" fill="#fff"/></g>
<g transform="translate(189.2,189)"><path d="M2.2,5 V3.4 A2.4,2.6 0 0 1 7,3.4 V5" fill="none" stroke="#e9aa4b" stroke-width="1.9"/><rect x="0" y="4.6" width="9.2" height="6.4" rx="0.8" fill="#e9aa4b"/><rect x="4" y="6.4" width="1.3" height="2.6" fill="#fff"/></g>
<rect x="50.9" y="209.9" width="14.4" height="14.4" fill="#2c3d57" stroke="#fff" stroke-width="1"/><rect x="54.0" y="215.5" width="8.8" height="2.9" fill="#fff"/>
<g transform="translate(166.9,207)"><circle cx="10" cy="4.8" r="2.0" fill="#2e86c8"/><path d="M7,11.5 V10 C7,8.2 8.4,7.6 10.2,7.6 C12.4,7.6 14.1,8.3 14.1,10 V11.5Z" fill="#2e86c8"/><circle cx="4" cy="6.2" r="2.4" fill="#2e86c8" stroke="#fff" stroke-width="1" paint-order="stroke"/><path d="M0,14 V12 C0,9.6 1.7,8.8 4.1,8.8 C6.6,8.8 8.3,9.6 8.3,12 V14Z" fill="#2e86c8" stroke="#fff" stroke-width="1" paint-order="stroke"/></g>
<g transform="translate(384,208.8)"><circle cx="10.6" cy="1.9" r="1.7" fill="#8b4aa9"/><path d="M9.4,4.6 H13.7 V8.6 C13.7,10.6 12.4,11.2 10.8,11.2 H9.4Z" fill="#8b4aa9"/><circle cx="4.4" cy="1.9" r="2" fill="#8b4aa9"/><path d="M0,4.6 H9.2 V9.6 C9.2,12.4 7,13.6 4.6,13.6 C2.2,13.6 0,12.4 0,9.6Z" fill="#8b4aa9"/><rect x="16.2" y="2.2" width="1" height="1" fill="#d98a3a"/></g>
<g transform="translate(167,227)"><path d="M0,16 V14.3 C0,12.2 2.8,11.4 7.1,11.4 C11.4,11.4 14.2,12.2 14.2,14.3 V16Z" fill="#2e86c8"/><circle cx="7.05" cy="6.0" r="3.9" fill="#2e86c8"/></g>
<g transform="translate(384,228.8)"><circle cx="10.6" cy="1.9" r="1.7" fill="#8b4aa9"/><path d="M9.4,4.6 H13.7 V8.6 C13.7,10.6 12.4,11.2 10.8,11.2 H9.4Z" fill="#8b4aa9"/><circle cx="4.4" cy="1.9" r="2" fill="#8b4aa9"/><path d="M0,4.6 H9.2 V9.6 C9.2,12.4 7,13.6 4.6,13.6 C2.2,13.6 0,12.4 0,9.6Z" fill="#8b4aa9"/><rect x="16.2" y="2.2" width="1" height="1" fill="#d98a3a"/></g>
<rect x="164" y="247" width="1" height="19" fill="#fff"/><rect x="165" y="247" width="19" height="19" fill="#62a3de"/>
<g transform="translate(167,247)"><path d="M0,16 V14.3 C0,12.2 2.8,11.4 7.1,11.4 C11.4,11.4 14.2,12.2 14.2,14.3 V16Z" fill="#2e86c8" stroke="#fff" stroke-width="2.4" paint-order="stroke" stroke-linejoin="round"/><circle cx="7.05" cy="6.0" r="3.9" fill="#2e86c8" stroke="#fff" stroke-width="2.4" paint-order="stroke" stroke-linejoin="round"/></g>
<g transform="translate(384,248.8)"><circle cx="10.6" cy="1.9" r="1.7" fill="#8b4aa9" stroke="#fff" stroke-width="2" paint-order="stroke" stroke-linejoin="round"/><path d="M9.4,4.6 H13.7 V8.6 C13.7,10.6 12.4,11.2 10.8,11.2 H9.4Z" fill="#8b4aa9" stroke="#fff" stroke-width="2" paint-order="stroke" stroke-linejoin="round"/><circle cx="4.4" cy="1.9" r="2" fill="#8b4aa9" stroke="#fff" stroke-width="2" paint-order="stroke" stroke-linejoin="round"/><path d="M0,4.6 H9.2 V9.6 C9.2,12.4 7,13.6 4.6,13.6 C2.2,13.6 0,12.4 0,9.6Z" fill="#8b4aa9" stroke="#fff" stroke-width="2" paint-order="stroke" stroke-linejoin="round"/><rect x="16.2" y="2.2" width="1" height="1" fill="#d98a3a"/></g>
<g transform="translate(167,267)"><path d="M0,16 V14.3 C0,12.2 2.8,11.4 7.1,11.4 C11.4,11.4 14.2,12.2 14.2,14.3 V16Z" fill="#2e86c8"/><circle cx="7.05" cy="6.0" r="3.9" fill="#2e86c8"/></g>
<g transform="translate(384,268.8)"><circle cx="10.6" cy="1.9" r="1.7" fill="#8b4aa9"/><path d="M9.4,4.6 H13.7 V8.6 C13.7,10.6 12.4,11.2 10.8,11.2 H9.4Z" fill="#8b4aa9"/><circle cx="4.4" cy="1.9" r="2" fill="#8b4aa9"/><path d="M0,4.6 H9.2 V9.6 C9.2,12.4 7,13.6 4.6,13.6 C2.2,13.6 0,12.4 0,9.6Z" fill="#8b4aa9"/><rect x="16.2" y="2.2" width="1" height="1" fill="#d98a3a"/></g>
<g transform="translate(167,287)"><path d="M0,16 V14.3 C0,12.2 2.8,11.4 7.1,11.4 C11.4,11.4 14.2,12.2 14.2,14.3 V16Z" fill="#2e86c8"/><circle cx="7.05" cy="6.0" r="3.9" fill="#2e86c8"/></g>
<g transform="translate(384,288.8)"><circle cx="10.6" cy="1.9" r="1.7" fill="#8b4aa9"/><path d="M9.4,4.6 H13.7 V8.6 C13.7,10.6 12.4,11.2 10.8,11.2 H9.4Z" fill="#8b4aa9"/><circle cx="4.4" cy="1.9" r="2" fill="#8b4aa9"/><path d="M0,4.6 H9.2 V9.6 C9.2,12.4 7,13.6 4.6,13.6 C2.2,13.6 0,12.4 0,9.6Z" fill="#8b4aa9"/><rect x="16.2" y="2.2" width="1" height="1" fill="#d98a3a"/></g>
<rect x="50.9" y="309.9" width="14.4" height="14.4" fill="#2c3d57" stroke="#fff" stroke-width="1"/><rect x="54.0" y="315.5" width="8.8" height="2.9" fill="#fff"/>
<g transform="translate(166.9,307)"><circle cx="10" cy="4.8" r="2.0" fill="#2e86c8"/><path d="M7,11.5 V10 C7,8.2 8.4,7.6 10.2,7.6 C12.4,7.6 14.1,8.3 14.1,10 V11.5Z" fill="#2e86c8"/><circle cx="4" cy="6.2" r="2.4" fill="#2e86c8" stroke="#fff" stroke-width="1" paint-order="stroke"/><path d="M0,14 V12 C0,9.6 1.7,8.8 4.1,8.8 C6.6,8.8 8.3,9.6 8.3,12 V14Z" fill="#2e86c8" stroke="#fff" stroke-width="1" paint-order="stroke"/></g>
<g transform="translate(167,327)"><path d="M0,16 V14.3 C0,12.2 2.8,11.4 7.1,11.4 C11.4,11.4 14.2,12.2 14.2,14.3 V16Z" fill="#2e86c8"/><circle cx="7.05" cy="6.0" r="3.9" fill="#2e86c8"/></g>
<g transform="translate(167,347)"><path d="M0,16 V14.3 C0,12.2 2.8,11.4 7.1,11.4 C11.4,11.4 14.2,12.2 14.2,14.3 V16Z" fill="#2e86c8"/><circle cx="7.05" cy="6.0" r="3.9" fill="#2e86c8"/></g>
<rect x="50.9" y="369.9" width="14.4" height="14.4" fill="#2c3d57" stroke="#fff" stroke-width="1"/><rect x="54.0" y="375.5" width="8.8" height="2.9" fill="#fff"/>
<g transform="translate(166.9,367)"><circle cx="10" cy="4.8" r="2.0" fill="#2e86c8"/><path d="M7,11.5 V10 C7,8.2 8.4,7.6 10.2,7.6 C12.4,7.6 14.1,8.3 14.1,10 V11.5Z" fill="#2e86c8"/><circle cx="4" cy="6.2" r="2.4" fill="#2e86c8" stroke="#fff" stroke-width="1" paint-order="stroke"/><path d="M0,14 V12 C0,9.6 1.7,8.8 4.1,8.8 C6.6,8.8 8.3,9.6 8.3,12 V14Z" fill="#2e86c8" stroke="#fff" stroke-width="1" paint-order="stroke"/></g>
<g transform="translate(167,387)"><path d="M0,16 V14.3 C0,12.2 2.8,11.4 7.1,11.4 C11.4,11.4 14.2,12.2 14.2,14.3 V16Z" fill="#2e86c8"/><circle cx="7.05" cy="6.0" r="3.9" fill="#2e86c8"/></g>
<rect x="164" y="407" width="1" height="19" fill="#fff"/><rect x="165" y="407" width="19" height="19" fill="#62a3de"/>
<g transform="translate(167,407)"><path d="M0,16 V14.3 C0,12.2 2.8,11.4 7.1,11.4 C11.4,11.4 14.2,12.2 14.2,14.3 V16Z" fill="#2e86c8" stroke="#fff" stroke-width="2.4" paint-order="stroke" stroke-linejoin="round"/><circle cx="7.05" cy="6.0" r="3.9" fill="#2e86c8" stroke="#fff" stroke-width="2.4" paint-order="stroke" stroke-linejoin="round"/></g>
<rect x="50.9" y="429.9" width="14.4" height="14.4" fill="#2c3d57" stroke="#fff" stroke-width="1"/><rect x="54.0" y="435.5" width="8.8" height="2.9" fill="#fff"/>
<g transform="translate(166.9,427)"><circle cx="10" cy="4.8" r="2.0" fill="#2e86c8"/><path d="M7,11.5 V10 C7,8.2 8.4,7.6 10.2,7.6 C12.4,7.6 14.1,8.3 14.1,10 V11.5Z" fill="#2e86c8"/><circle cx="4" cy="6.2" r="2.4" fill="#2e86c8" stroke="#fff" stroke-width="1" paint-order="stroke"/><path d="M0,14 V12 C0,9.6 1.7,8.8 4.1,8.8 C6.6,8.8 8.3,9.6 8.3,12 V14Z" fill="#2e86c8" stroke="#fff" stroke-width="1" paint-order="stroke"/></g>
<g transform="translate(167,447)"><path d="M0,16 V14.3 C0,12.2 2.8,11.4 7.1,11.4 C11.4,11.4 14.2,12.2 14.2,14.3 V16Z" fill="#2e86c8"/><circle cx="7.05" cy="6.0" r="3.9" fill="#2e86c8"/></g>
<g transform="translate(185,247)"><rect x="-1" y="0" width="1.5" height="19" fill="#fff"/><rect x="0.5" y="0.5" width="17" height="18.2" fill="#fff" stroke="#bfe6e6" stroke-width="1"/><rect x="2" y="2" width="13.8" height="1.8" fill="#666"/><rect x="7.6" y="1.2" width="3" height="1" fill="#777"/><rect x="3.2" y="5.1" width="11.7" height="11.7" fill="#666"/><rect x="5" y="6.7" width="1.9" height="8.2" fill="#fff"/><rect x="8.1" y="6.7" width="1.9" height="8.2" fill="#fff"/><rect x="11.2" y="6.7" width="1.9" height="8.2" fill="#fff"/></g>
<rect x="185.6" y="408.40000000000003" width="16.8" height="15.9" fill="#fff"/><path d="M195.70,415.80 L199.90,415.80 M195.06,417.36 L198.03,420.33 M193.50,418.00 L193.50,422.20 M191.94,417.36 L188.97,420.33 M191.30,415.80 L187.10,415.80 M191.94,414.24 L188.97,411.27 M193.50,413.60 L193.50,409.40 M195.06,414.24 L198.03,411.27 " stroke="#e9aa4b" stroke-width="1.3" fill="none"/><circle cx="193.5" cy="415.8" r="2.1" fill="#fff" stroke="#e9aa4b" stroke-width="1.3"/>
</svg>
<div class="a" style="left:484.2px;top:16px;width:40px;height:39.6px;border-radius:50%;background:#f722b6;box-shadow:3px 4px 5px rgba(0,0,0,.42);color:#fff;font-family:NanumGothic,'Liberation Sans',sans-serif;-webkit-text-stroke:1.1px #fff;font-size:26.5px;line-height:42px;padding-left:1px;text-align:center">1</div>
<div class="a" style="left:547px;top:16px;width:40px;height:39.6px;border-radius:50%;background:#f722b6;box-shadow:3px 4px 5px rgba(0,0,0,.42);color:#fff;font-family:NanumGothic,'Liberation Sans',sans-serif;-webkit-text-stroke:1.1px #fff;font-size:26.5px;line-height:42px;padding-left:1px;text-align:center">2</div>
</body></html>
